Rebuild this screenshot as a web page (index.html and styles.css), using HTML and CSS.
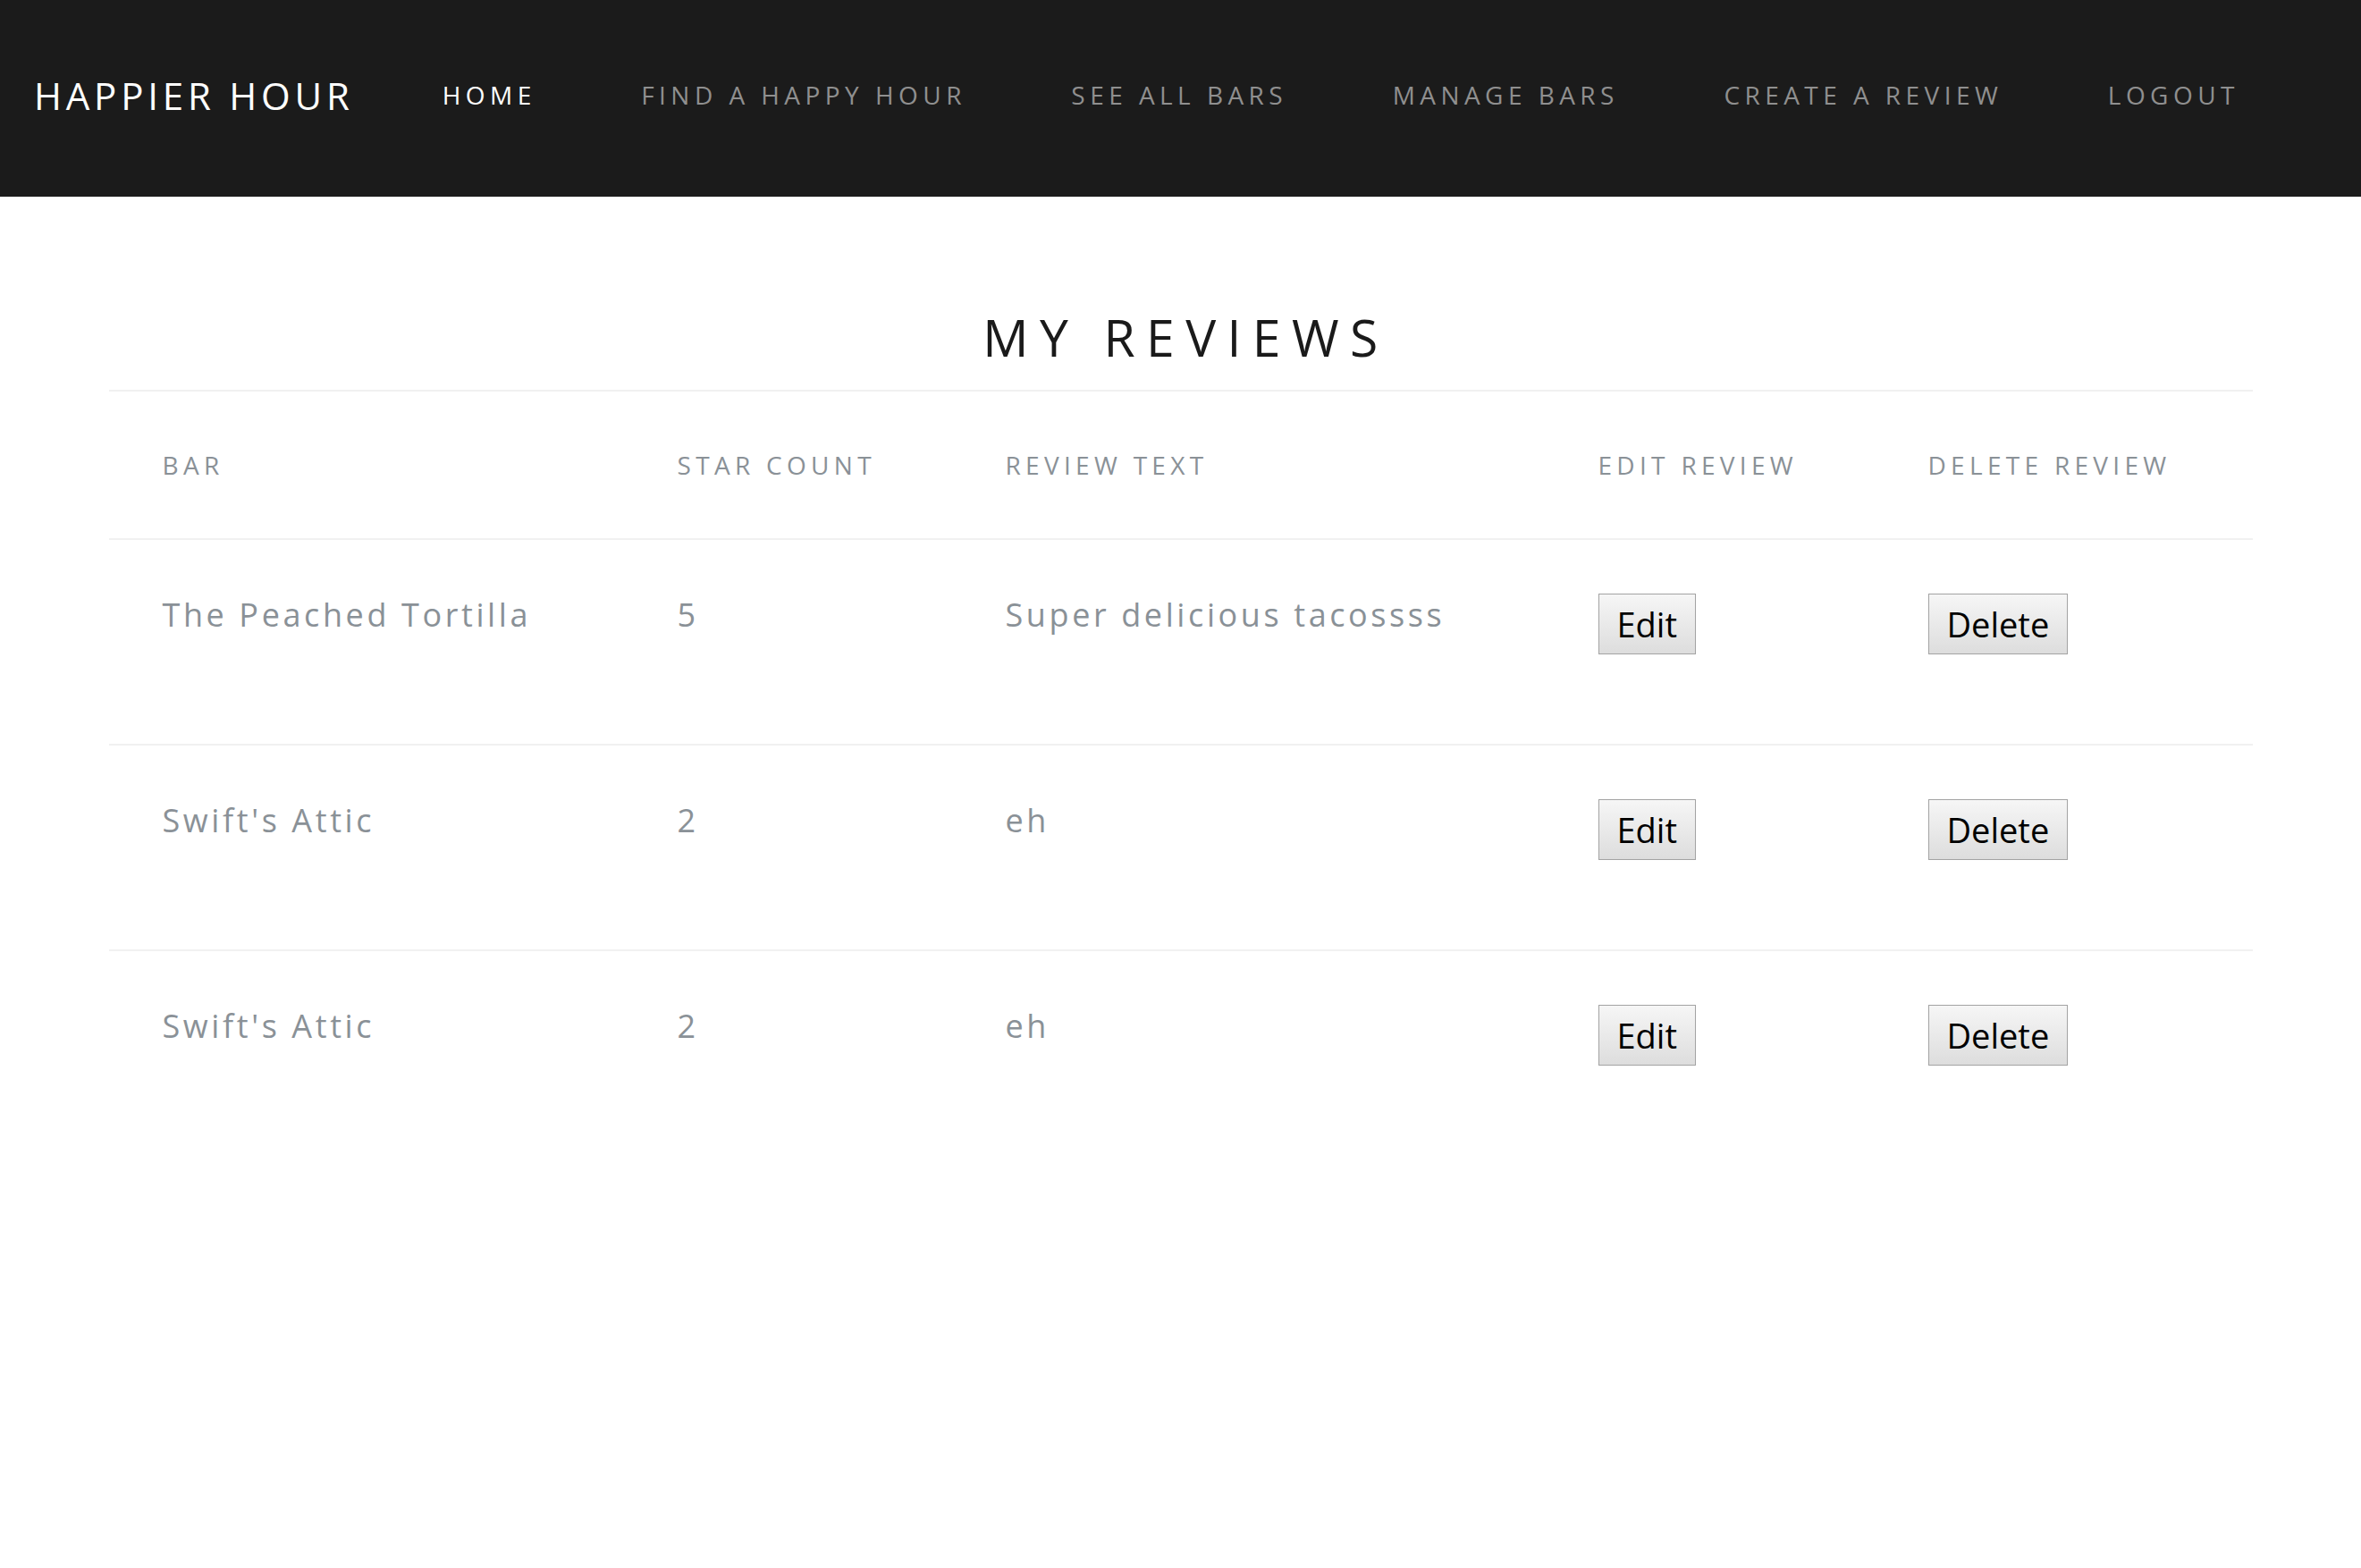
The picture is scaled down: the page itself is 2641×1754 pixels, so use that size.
FILE: index.html
```html
<!DOCTYPE html>
<html lang="en">
<head>
<meta charset="utf-8">
<title>Happier Hour - My Reviews</title>
<link rel="stylesheet" href="styles.css">
</head>
<body>
<nav class="navbar">
  <a class="brand" href="#">HAPPIER HOUR</a>
  <ul class="nav-links">
    <li><a class="nav-link active" href="#">HOME</a></li>
    <li><a class="nav-link" href="#">FIND A HAPPY HOUR</a></li>
    <li><a class="nav-link" href="#">SEE ALL BARS</a></li>
    <li><a class="nav-link" href="#">MANAGE BARS</a></li>
    <li><a class="nav-link" href="#">CREATE A REVIEW</a></li>
    <li><a class="nav-link" href="#">LOGOUT</a></li>
  </ul>
</nav>
<main class="container">
  <h1 class="page-title">MY REVIEWS</h1>
  <table class="reviews">
    <colgroup>
      <col class="col-bar">
      <col class="col-star">
      <col class="col-text">
      <col class="col-edit">
      <col class="col-delete">
    </colgroup>
    <thead>
      <tr>
        <th>BAR</th>
        <th>STAR COUNT</th>
        <th>REVIEW TEXT</th>
        <th>EDIT REVIEW</th>
        <th>DELETE REVIEW</th>
      </tr>
    </thead>
    <tbody>
      <tr>
        <td>The Peached Tortilla</td>
        <td>5</td>
        <td>Super delicious tacossss</td>
        <td><button class="btn">Edit</button></td>
        <td><button class="btn">Delete</button></td>
      </tr>
      <tr>
        <td>Swift's Attic</td>
        <td>2</td>
        <td>eh</td>
        <td><button class="btn">Edit</button></td>
        <td><button class="btn">Delete</button></td>
      </tr>
      <tr>
        <td>Swift's Attic</td>
        <td>2</td>
        <td>eh</td>
        <td><button class="btn">Edit</button></td>
        <td><button class="btn">Delete</button></td>
      </tr>
    </tbody>
  </table>
</main>
</body>
</html>
```

FILE: styles.css
```css
html, body {
  margin: 0;
  padding: 0;
  background: #ffffff;
}

body {
  font-family: "Open Sans", "Noto Sans", sans-serif;
}

.navbar {
  box-sizing: border-box;
  height: 220px;
  background: #1b1b1b;
  display: flex;
  align-items: center;
  padding: 0 0 6px 38px;
}

.brand {
  font-size: 42px;
  line-height: 1;
  letter-spacing: 4.8px;
  color: #ffffff;
  text-decoration: none;
  margin-right: 99px;
  white-space: nowrap;
}

.nav-links {
  list-style: none;
  margin: 0;
  padding: 0;
  display: flex;
  gap: 117.5px;
}

.nav-link {
  font-size: 28px;
  line-height: 1;
  letter-spacing: 5.45px;
  color: #8f8f8f;
  text-decoration: none;
  white-space: nowrap;
}

.nav-link.active {
  color: #ffffff;
}

.container {
  width: 2398px;
  margin: 0 auto;
  padding-top: 129px;
}

.page-title {
  margin: 0 0 30px 0;
  padding-left: 12px;
  text-align: center;
  font-size: 57px;
  line-height: 1;
  font-weight: 400;
  letter-spacing: 12.4px;
  color: #1a1a1a;
}

.reviews {
  width: 100%;
  border-collapse: collapse;
  table-layout: fixed;
}

.col-bar { width: 576px; }
.col-star { width: 367px; }
.col-text { width: 663px; }
.col-edit { width: 369px; }
.col-delete { width: 423px; }

.reviews tr {
  border-top: 2px solid #f1f1f1;
}

.reviews th {
  text-align: left;
  font-weight: 400;
  font-size: 28px;
  line-height: 1;
  letter-spacing: 5.3px;
  color: #8a9197;
  padding: 68px 0 68px 60px;
  vertical-align: middle;
  white-space: nowrap;
}

.reviews td {
  font-size: 36px;
  line-height: 1.33;
  letter-spacing: 3.6px;
  color: #8a9197;
  padding: 60px 0 100px 60px;
  vertical-align: top;
  white-space: nowrap;
}

.btn {
  font-family: "Open Sans", "Noto Sans", sans-serif;
  font-size: 38px;
  line-height: 52px;
  letter-spacing: 0;
  color: #000000;
  padding: 7px 20px;
  margin: 0;
  border: 1px solid #a3a3a3;
  border-radius: 0;
  background: linear-gradient(#f6f6f6, #dddddd);
  display: block;
}
```
